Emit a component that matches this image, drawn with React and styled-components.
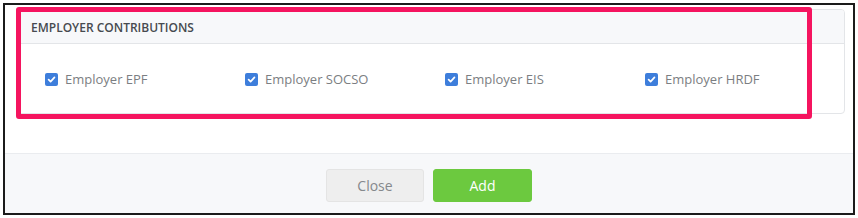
import React from "react"
import styled, { createGlobalStyle } from "styled-components"

const GlobalStyle = createGlobalStyle`
    html, body {
        margin: 0;
        padding: 0;
        background: #ffffff;
        font-family: "Open Sans", "Liberation Sans", sans-serif;
    }
    * {
        box-sizing: border-box;
    }
`

const Frame = styled.div`
    position: relative;
    margin: 3px 0 0 3px;
    width: 852px;
    height: 212px;
    border: 2px solid #1b1b1b;
    display: flex;
    flex-direction: column;
    background: #ffffff;
`

const Body = styled.div`
    padding: 4px 8px 0 11px;
    height: 148px;
`

const Card = styled.div`
    border: 1px solid #e3e5e8;
    border-radius: 4px;
    overflow: hidden;
`

const CardHeader = styled.div`
    height: 34px;
    background: #f7f8fa;
    border-bottom: 1px solid #e3e5e8;
    display: flex;
    align-items: center;
    padding: 2px 14px 0;
    font-size: 12px;
    font-weight: 600;
    color: #464a4f;
`

const CheckRow = styled.div`
    height: 69px;
    display: grid;
    grid-template-columns: repeat(4, 200px);
    align-items: center;
    padding: 1px 0 0 28px;
`

const CheckItem = styled.label`
    display: flex;
    align-items: center;
    gap: 7px;
    font-size: 13px;
    color: #7b7e82;
`

const Box = styled.span`
    width: 13px;
    height: 13px;
    border-radius: 2px;
    background: #3e7edb;
    display: flex;
    align-items: center;
    justify-content: center;
`

const Footer = styled.div`
    flex: 1;
    background: #f7f8fa;
    border-top: 1px solid #eaecef;
    display: flex;
    justify-content: center;
    gap: 9px;
    padding-top: 15px;
`

const Button = styled.button`
    width: ${({ wide }) => wide ? 99 : 98}px;
    height: 33px;
    border-radius: 3px;
    font-family: inherit;
    font-size: 14px;
    cursor: pointer;
    border: 1px solid ${({ primary }) => primary ? "#6cc93f" : "#e4e4e4"};
    background: ${({ primary }) => primary ? "#6cc93f" : "#eeeeee"};
    color: ${({ primary }) => primary ? "#ffffff" : "#85888c"};
`

const Highlight = styled.div`
    position: absolute;
    left: 11px;
    top: 2px;
    width: 796px;
    height: 112px;
    border: 5px solid #f5145f;
    border-radius: 3px;
    pointer-events: none;
`

const Check = () => (
    <Box>
        <svg width="9" height="9" viewBox="0 0 10 10">
            <path d="M1.8 5.2 L4 7.3 L8.3 2.6" fill="none" stroke="#ffffff" strokeWidth="1.9" strokeLinecap="round" strokeLinejoin="round" />
        </svg>
    </Box>
)

const items = ["Employer EPF", "Employer SOCSO", "Employer EIS", "Employer HRDF"]

const App = () => {
    return (
        <>
            <GlobalStyle />
            <Frame>
                <Body>
                    <Card>
                        <CardHeader>EMPLOYER CONTRIBUTIONS</CardHeader>
                        <CheckRow>
                            {items.map(item => (
                                <CheckItem key={item}>
                                    <Check />
                                    {item}
                                </CheckItem>
                            ))}
                        </CheckRow>
                    </Card>
                </Body>
                <Footer>
                    <Button>Close</Button>
                    <Button primary wide>Add</Button>
                </Footer>
                <Highlight />
            </Frame>
        </>
    )
}

export default App
